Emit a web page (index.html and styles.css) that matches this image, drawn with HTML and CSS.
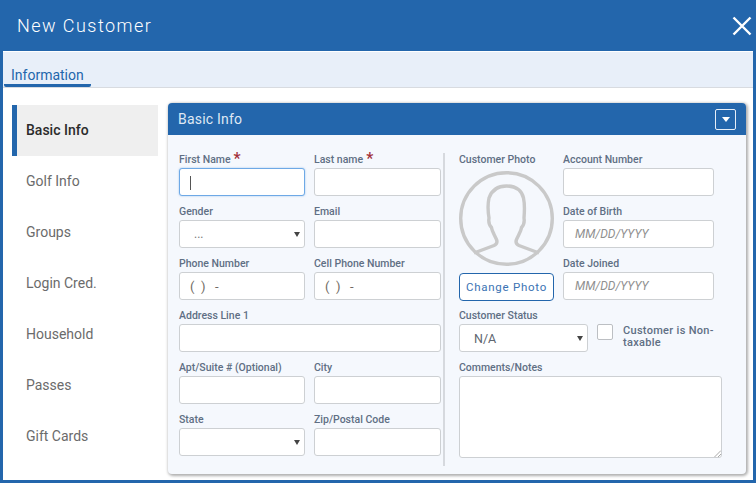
FILE: index.html
```html
<!DOCTYPE html>
<html lang="en">
<head>
<meta charset="utf-8">
<title>New Customer</title>
<link rel="stylesheet" href="styles.css">
</head>
<body>
<div class="window">
  <header class="topbar">
    <h1 class="title">New Customer</h1>
    <svg class="close" viewBox="0 0 20 20" width="20" height="20"><path d="M1.5 1.5 18.5 18.5M18.5 1.5 1.5 18.5" stroke="#fff" stroke-width="2.4" fill="none"/></svg>
  </header>
  <nav class="tabs"><span class="tab">Information</span></nav>
  <div class="content">
    <ul class="side">
      <li class="side-item active">Basic Info</li>
      <li class="side-item">Golf Info</li>
      <li class="side-item">Groups</li>
      <li class="side-item">Login Cred.</li>
      <li class="side-item">Household</li>
      <li class="side-item">Passes</li>
      <li class="side-item">Gift Cards</li>
    </ul>
    <section class="panel">
      <div class="panel-head">
        <span class="panel-title">Basic Info</span>
        <span class="collapse"><span class="tri"></span></span>
      </div>
      <div class="panel-body">
        <div class="left-form">
          <div class="field"><label class="lbl">First Name<span class="req">*</span></label><div class="input focus"><span class="caret"></span></div></div>
          <div class="field"><label class="lbl">Last name<span class="req">*</span></label><div class="input"></div></div>
          <div class="field"><label class="lbl">Gender</label><div class="input select"><span class="dots">...</span><span class="arrow"></span></div></div>
          <div class="field"><label class="lbl">Email</label><div class="input"></div></div>
          <div class="field"><label class="lbl">Phone Number</label><div class="input phone">( &nbsp;)&nbsp;&nbsp; -</div></div>
          <div class="field"><label class="lbl">Cell Phone Number</label><div class="input phone">( &nbsp;)&nbsp;&nbsp; -</div></div>
          <div class="field wide"><label class="lbl">Address Line 1</label><div class="input"></div></div>
          <div class="field"><label class="lbl">Apt/Suite # (Optional)</label><div class="input"></div></div>
          <div class="field"><label class="lbl">City</label><div class="input"></div></div>
          <div class="field"><label class="lbl">State</label><div class="input select"><span class="arrow"></span></div></div>
          <div class="field"><label class="lbl">Zip/Postal Code</label><div class="input"></div></div>
        </div>
        <div class="divider"></div>
        <div class="right-form">
          <div class="top-right">
            <div class="photo-col">
              <label class="lbl">Customer Photo</label>
              <svg class="avatar" viewBox="0 0 95 95" width="95" height="95" fill="none" stroke="#c9c9c9" stroke-width="3.4">
                <circle cx="47.5" cy="47.5" r="45.8"/>
                <path d="M15 82 35 74.5C38 73 38.500 71 37.500 68.500 35 63 33 60 32.500 56.500 30 54 29.500 50 30 47 29 41 28.500 34 30 27 33 18.500 40 15 47.500 15 56 15 62.500 19 64.500 27 66 34 65.500 41 65 47 65.500 50 65 54 62.500 56.500 62 60 60 63 57.500 68.500 56.500 71 57 73 60 74.500L80 82"/>
              </svg>
              <button class="change" type="button">Change Photo</button>
            </div>
            <div class="date-col">
              <div class="field"><label class="lbl">Account Number</label><div class="input"></div></div>
              <div class="field"><label class="lbl">Date of Birth</label><div class="input date">MM/DD/YYYY</div></div>
              <div class="field"><label class="lbl">Date Joined</label><div class="input date">MM/DD/YYYY</div></div>
            </div>
          </div>
          <div class="status-row">
            <div class="field status"><label class="lbl">Customer Status</label><div class="input select na">N/A<span class="arrow"></span></div></div>
            <span class="check"></span>
            <span class="check-label">Customer is Non-taxable</span>
          </div>
          <div class="field"><label class="lbl">Comments/Notes</label><div class="input notes"><svg class="grip" viewBox="0 0 7 7" width="7" height="7"><path d="M0.500 7 7 0.500M4 7 7 4" stroke="#a9a9a9" fill="none"/></svg></div></div>
        </div>
      </div>
    </section>
  </div>
</div>
</body>
</html>
```
FILE: styles.css
```css
* { box-sizing: border-box; }
html, body { margin: 0; padding: 0; }
body { width: 756px; height: 483px; overflow: hidden; font-family: Roboto, "Liberation Sans", sans-serif; background: #fff; }
.window { width: 756px; height: 483px; display: flex; flex-direction: column; background: #fff; border: 3px solid #2366ac; border-top: 0; }
.topbar { height: 51px; margin: 0 -3px; padding: 0 4px 0 17px; flex: none; display: flex; align-items: center; justify-content: space-between; background: #2366ac; }
.title { margin: 0; font-size: 18px; font-weight: 300; letter-spacing: 1.45px; color: #fff; position: relative; top: 0; }
.close { margin-top: 0; margin-right: 0; }
.tabs { height: 37px; flex: none; background: #e8eff9; border-top: 1px solid #fff; border-bottom: 1px solid #d8dbe0; padding-left: 1px; display: flex; align-items: flex-end; }
.tab { width: 87px; height: 20px; padding-left: 7px; font-size: 14px; line-height: 17px; color: #2366ac; border-bottom: 3px solid #2366ac; border-radius: 0 0 2px 2px; position: relative; top: 0; }
.content { flex: 1; display: flex; padding: 15px 7px 6px 9px; min-height: 0; }
.side { list-style: none; margin: 2px 10px 0 0; padding: 0; width: 146px; flex: none; }
.side-item { height: 51px; padding-left: 14px; line-height: 51px; font-size: 14px; color: #6b6b6b; }
.side-item.active { background: #efefef; border-left: 5px solid #2366ac; padding-left: 9px; font-weight: 500; color: #2b2b2b; }
.panel { flex: 1; display: flex; flex-direction: column; background: #f5f8fd; border-radius: 4px; box-shadow: 1px 1px 3px 1px rgba(0,0,0,.32); min-width: 0; }
.panel-head { height: 32px; flex: none; padding: 0 10px; display: flex; align-items: center; justify-content: space-between; background: #2366ac; border-radius: 4px 4px 0 0; }
.panel-title { font-size: 14px; font-weight: 400; color: #dfe8f4; letter-spacing: .2px; }
.collapse { width: 21px; height: 21px; border: 1px solid #e6eef8; border-radius: 2px; display: flex; align-items: center; justify-content: center; }
.tri { width: 0; height: 0; border-left: 4px solid transparent; border-right: 4px solid transparent; border-top: 5px solid #fff; }
.panel-body { flex: 1; display: flex; padding: 17px 12px 7px 11px; }
.left-form { width: 262px; flex: none; display: grid; grid-template-columns: 126px 127px; column-gap: 9px; grid-auto-rows: 52px; align-content: start; }
.wide { grid-column: 1 / 3; }
.field { display: flex; flex-direction: column; }
.lbl { height: 16px; font-size: 10.500px; line-height: 16px; font-weight: 500; color: #5f6f84; white-space: nowrap; position: relative; display: block; }
.req { color: #a2303a; font-size: 16px; line-height: 12px; margin-left: 3px; font-weight: 500; vertical-align: -1px; }
.input { height: 28px; background: #fff; border: 1px solid #cdd0d3; border-radius: 3px; font-size: 13px; color: #666; position: relative; flex: none; }
.focus { border-color: #6ea9e6; box-shadow: 0 0 2px rgba(110,169,230,.7); }
.caret { position: absolute; left: 10px; top: 7px; width: 1px; height: 14px; background: #555; }
.select { display: flex; align-items: center; }
.dots { padding: 0 0 0 14px; font-size: 12px; line-height: 28px; color: #777; }
.arrow { position: absolute; right: 4px; top: 11px; width: 0; height: 0; border-left: 3px solid transparent; border-right: 3px solid transparent; border-top: 5px solid #444; }
.phone { padding-left: 10px; line-height: 27px; font-size: 13px; color: #706a62; white-space: pre; }
.date { padding-left: 11px; line-height: 26px; font-size: 12px; font-style: italic; color: #8f8f8f; }
.divider { width: 2px; margin: 1px 14px 0 2px; height: 313px; background: #d6d9de; flex: none; }
.right-form { flex: 1; min-width: 0; }
.top-right { display: grid; grid-template-columns: 95px 151px; column-gap: 9px; height: 156px; }
.photo-col { display: flex; flex-direction: column; align-items: flex-start; }
.avatar { display: block; margin-top: 3px; }
.change { width: 95px; height: 28px; margin-top: 7px; padding: 0; background: #fff; border: 1px solid #2366ac; border-radius: 4px; font-family: inherit; font-size: 11.500px; letter-spacing: .75px; color: #3b73b3; }
.date-col { display: grid; grid-auto-rows: 52px; }
.status-row { display: flex; height: 52px; align-items: flex-start; }
.status { width: 129px; flex: none; }
.na { padding-left: 14px; font-size: 12.500px; color: #5e6670; }
.check { width: 16px; height: 16px; margin: 16px 0 0 9px; background: #fff; border: 1px solid #bcbfc3; border-radius: 2px; flex: none; }
.check-label { width: 100px; margin: 17px 0 0 10px; font-size: 11px; line-height: 12px; font-weight: 500; letter-spacing: .3px; color: #5f6f84; }
.notes { width: 263px; height: 82px; }
.grip { position: absolute; right: 0; bottom: 0; }
```
